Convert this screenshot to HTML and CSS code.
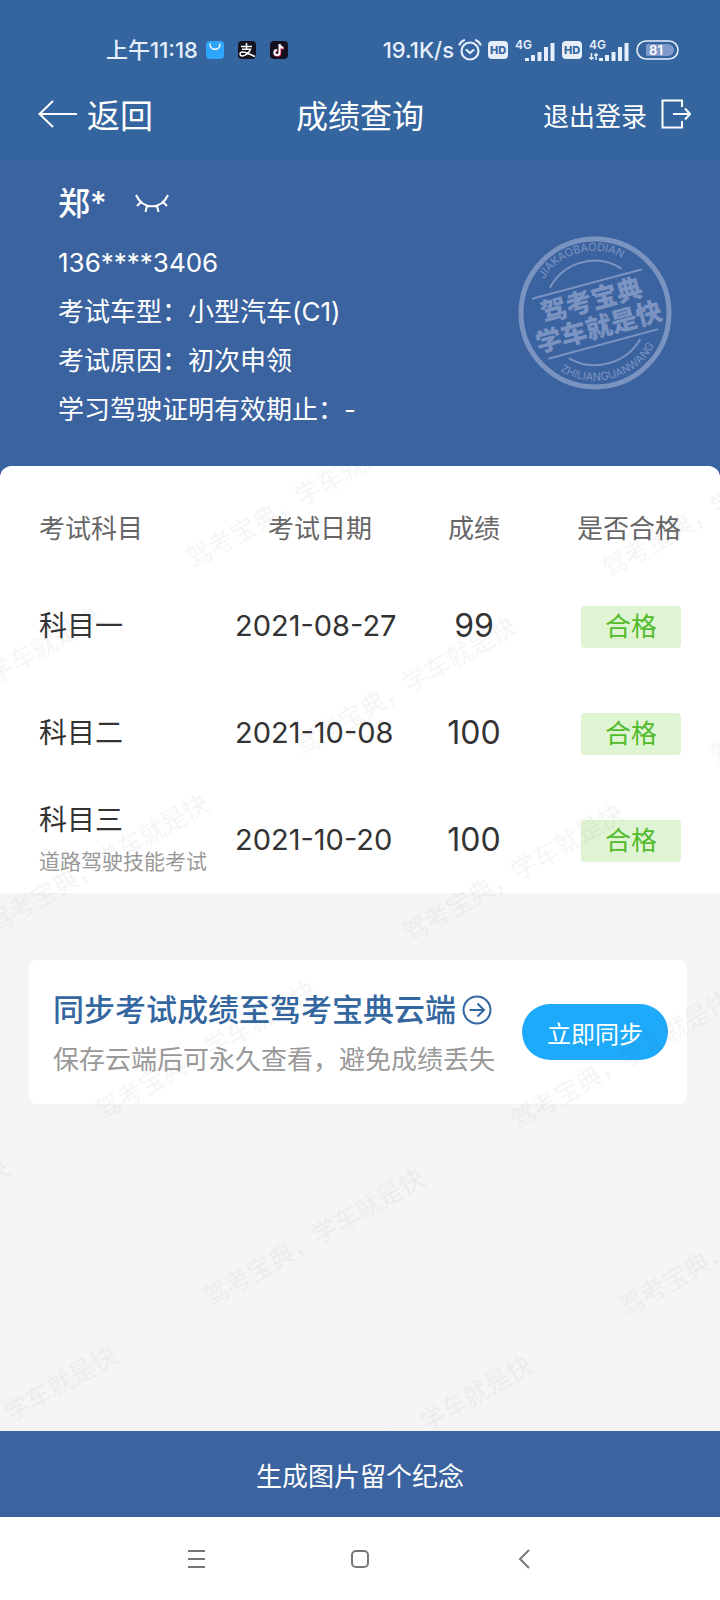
FILE: index.html
```html
<!DOCTYPE html>
<html lang="zh-CN">
<head>
  <meta charset="UTF-8">
  <meta name="viewport" content="width=device-width, initial-scale=1.0">
  <title>成绩查询</title>
  <link rel="stylesheet" href="styles.css">
</head>
<body>
  <!-- 状态栏 -->
  <div class="status">
    <div class="status-left">
      <span>上午11:18</span>
      <svg width="18" height="18" viewBox="0 0 18 18">
        <rect width="18" height="18" rx="4" fill="#2ea6fb"/>
        <path d="M4 3c0 7 10 7 10 0" fill="none" stroke="#fff" stroke-width="1.4" stroke-linecap="round"/>
      </svg>
      <svg width="18" height="18" viewBox="0 0 18 18">
        <rect width="18" height="18" rx="4" fill="#15131f"/>
        <path d="M3 5.500h11M8.500 2v6M4 8.300h8.500C11 12 7.500 15 4.500 15c-3.500 0-3-4 0-4 4 0 7 2.500 12.500 4.500" fill="none" stroke="#fff" stroke-width="1.500"/>
      </svg>
      <svg width="18" height="18" viewBox="0 0 18 18">
        <rect width="18" height="18" rx="4" fill="#15101f"/>
        <path d="M9.500 3v8.500a2.600 2.600 0 1 1-2.600-2.600M9.500 3.500c.4 2 1.800 3.200 3.800 3.300" fill="none" stroke="#e8305f" stroke-width="2" transform="translate(.7 .7)"/>
        <path d="M9.500 3v8.500a2.600 2.600 0 1 1-2.600-2.600M9.500 3.500c.4 2 1.800 3.200 3.800 3.300" fill="none" stroke="#fff" stroke-width="2"/>
      </svg>
    </div>
    <div class="status-right">
      <span>19.1K/s</span>
      <svg width="24" height="24" viewBox="0 0 24 24" fill="none" stroke="#e6eefb" stroke-width="2.200" stroke-linecap="round">
        <circle cx="12" cy="13" r="8.500"/>
        <path d="M8.500 12l3.500 3 3.500-3M1.500 6.500C2.500 4.500 4 3 6 2.200M22.500 6.500c-1-2-2.500-3.500-4.500-4.300"/>
      </svg>
      <svg class="hd" width="20" height="20" viewBox="0 0 20 20">
        <rect y="1" width="20" height="18" rx="4" fill="#e6eefb"/>
        <text x="10" y="14" text-anchor="middle">HD</text>
      </svg>
      <svg class="signal" width="42" height="28" viewBox="0 0 42 28">
        <text x="1" y="13">4G</text>
        <path d="M13 25v-3M19 25v-6M25.500 25v-9M32 25V11M38.500 25V7" stroke="#e6eefb" stroke-width="4"/>
      </svg>
      <svg class="hd" width="20" height="20" viewBox="0 0 20 20">
        <rect y="1" width="20" height="18" rx="4" fill="#e6eefb"/>
        <text x="10" y="14" text-anchor="middle">HD</text>
      </svg>
      <svg class="signal" width="42" height="28" viewBox="0 0 42 28">
        <text x="1" y="13">4G</text>
        <path d="M3.500 17v7M1 22h5M8 17v7M6 19h4" stroke="#e6eefb" stroke-width="1.500"/>
        <path d="M13 25v-3M19 25v-6M25.500 25v-9M32 25V11M38.500 25V7" stroke="#e6eefb" stroke-width="4"/>
      </svg>
      <svg class="battery" width="43" height="20" viewBox="0 0 43 20">
        <rect x="1" y="1" width="41" height="18" rx="9" fill="none" stroke="#e6eefb" stroke-width="1.600"/>
        <path d="M12 4h20a6 6 0 0 1 6 6 6 6 0 0 1-6 6H12a2 2 0 0 1-2-2V6a2 2 0 0 1 2-2z" fill="#7f9aca"/>
        <text x="20" y="15" text-anchor="middle">81</text>
      </svg>
    </div>
  </div>

  <!-- 導航欄 -->
  <header class="navbar">
    <a class="back" href="#">
      <svg width="39" height="28" viewBox="0 0 39 28" fill="none" stroke="#fff" stroke-width="2">
        <path d="M39 14H1.500M15 1L1.500 14 15 27"/>
      </svg>
      返回
    </a>
    <h1>成绩查询</h1>
    <a class="logout" href="#">
      退出登录
      <svg width="30" height="30" viewBox="0 0 30 30" fill="none" stroke="#fff" stroke-width="2">
        <path d="M21 8V1.500H1.500v27H21V22M12 15h17M24 9.500l5 5.500-5 5.500"/>
      </svg>
    </a>
  </header>

  <!-- 考生資訊 -->
  <section class="profile">
    <div class="info">
      <div class="name">
        <h2>郑*</h2>
        <button class="eye" aria-label="显示姓名">
          <svg width="34" height="20" viewBox="0 0 34 20" fill="none" stroke="#fff" stroke-width="2">
            <path d="M1 1c7 15 25 15 32 0M6 8l-4 4M12 12l-1.500 6M22 12l1.500 6M28 8l4 4"/>
          </svg>
        </button>
      </div>
      <p>136****3406</p>
      <p>考试车型：小型汽车(C1)</p>
      <p>考试原因：初次申领</p>
      <p>学习驾驶证明有效期止：-</p>
    </div>
    <svg class="seal" width="154" height="154" viewBox="0 0 154 154">
      <defs>
        <path id="arc-top" d="M20 62A58 58 0 0 1 134 62"/>
        <path id="arc-bottom" d="M12 94A67 67 0 0 0 142 94"/>
      </defs>
      <circle cx="77" cy="77" r="74" fill="none" stroke-width="5"/>
      <g transform="rotate(-15 77 77)">
        <path d="M20 47h114M20 109h114M40 41A50 50 0 0 1 114 41M40 114A53 53 0 0 0 114 114" fill="none" stroke-width="2"/>
        <text class="seal-main" x="77" y="73" text-anchor="middle">驾考宝典</text>
        <text class="seal-main" x="77" y="101" text-anchor="middle">学车就是快</text>
        <text class="seal-sub"><textPath href="#arc-top" startOffset="50%" text-anchor="middle">JIAKAOBAODIAN</textPath></text>
        <text class="seal-sub"><textPath href="#arc-bottom" startOffset="50%" text-anchor="middle">ZHILIANGUANWANG</textPath></text>
      </g>
    </svg>
  </section>

  <main class="content">
    <div class="score">
      <table>
        <thead>
          <tr>
            <th class="subject">考试科目</th>
            <th class="date">考试日期</th>
            <th class="mark">成绩</th>
            <th class="result">是否合格</th>
          </tr>
        </thead>
        <tbody>
          <tr>
            <td class="subject">科目一</td>
            <td class="date">2021-08-27</td>
            <td class="mark">99</td>
            <td class="result"><span class="pass">合格</span></td>
          </tr>
          <tr>
            <td class="subject">科目二</td>
            <td class="date">2021-10-08</td>
            <td class="mark">100</td>
            <td class="result"><span class="pass">合格</span></td>
          </tr>
          <tr>
            <td class="subject">科目三<small>道路驾驶技能考试</small></td>
            <td class="date">2021-10-20</td>
            <td class="mark">100</td>
            <td class="result"><span class="pass">合格</span></td>
          </tr>
        </tbody>
      </table>
    </div>

    <section class="sync">
      <div>
        <h3>
          同步考试成绩至驾考宝典云端
          <svg width="30" height="30" viewBox="0 0 30 30" fill="none" stroke="#3466a0" stroke-width="2">
            <circle cx="15" cy="15" r="13.500"/>
            <path d="M7.500 15h14M15.500 8.500L22 15l-6.500 6.500"/>
          </svg>
        </h3>
        <p>保存云端后可永久查看，避免成绩丢失</p>
      </div>
      <button>立即同步</button>
    </section>

    <!-- 浮水印 -->
    <svg class="watermark" aria-hidden="true">
      <defs>
        <pattern id="mark" x="100" y="0" width="355" height="216" patternUnits="userSpaceOnUse" patternTransform="rotate(-30)">
          <text x="16" y="186">驾考宝典，学车就是快</text>
        </pattern>
      </defs>
      <rect width="100%" height="100%" fill="url(#mark)"/>
    </svg>
  </main>

  <button class="save">生成图片留个纪念</button>

  <!-- 系統按鍵 -->
  <nav class="system">
    <button aria-label="菜单">
      <svg width="20" height="20" viewBox="0 0 20 20" fill="none" stroke="#777" stroke-width="2">
        <path d="M2 2h17M2 10h17M2 18h17"/>
      </svg>
    </button>
    <button aria-label="主页">
      <svg width="20" height="20" viewBox="0 0 20 20" fill="none" stroke="#777" stroke-width="2">
        <rect x="2" y="2" width="16" height="16" rx="4"/>
      </svg>
    </button>
    <button aria-label="返回">
      <svg width="20" height="20" viewBox="0 0 20 20" fill="none" stroke="#777" stroke-width="2">
        <path d="M15 1L6 10l9 9"/>
      </svg>
    </button>
  </nav>
</body>
</html>
```

FILE: styles.css
```css
* {
  box-sizing: border-box;
}

body {
  margin: 0;
  min-height: 100vh;
  display: flex;
  flex-direction: column;
  background: #3b63a0;
  color: #333;
  font-family: Inter, "Noto Sans CJK SC", sans-serif;
  font-size: 26px;
}

h1,
h2,
h3,
p {
  margin: 0;
}

a {
  color: inherit;
  text-decoration: none;
}

button {
  appearance: none;
  border: none;
  padding: 0;
  background: none;
  color: inherit;
  font: inherit;
  cursor: pointer;
}

svg {
  display: block;
  flex-shrink: 0;
}

/* 狀態欄 */
.status {
  display: flex;
  justify-content: space-between;
  padding: 28px 41px 0 106px;
  background: #34659f;
  color: #e6eefb;
  font-size: 22px;
  font-weight: 500;
  line-height: 44px;
}

.status-left,
.status-right {
  display: flex;
  align-items: center;
}

.status-left {
  gap: 14px;
}

.status-left span {
  margin-right: -6px;
}

.status-right {
  gap: 6px;
}

.status-right span {
  margin-right: -2px;
}

.status svg text {
  fill: #e6eefb;
  font-size: 12px;
  font-weight: 600;
}

.status .hd text {
  fill: #34659f;
  font-size: 11px;
  font-weight: 800;
}

.status .battery text {
  fill: #fff;
  font-size: 13px;
}

/* 導航欄 */
.navbar {
  display: grid;
  grid-template-columns: 1fr auto 1fr;
  align-items: center;
  height: 88px;
  padding: 0 29px 4px 29px;
  background: #34659f;
  color: #fff;
}

.navbar h1 {
  font-size: 32px;
  font-weight: 400;
}

.back,
.logout {
  display: flex;
  align-items: center;
}

.back {
  gap: 10px;
  padding-left: 9px;
  font-size: 33px;
}

.logout {
  justify-content: flex-end;
  gap: 14px;
}

/* 考生資訊 */
.profile {
  display: flex;
  justify-content: space-between;
  align-items: center;
  padding: 20px 48px 32px 58px;
  color: #fff;
}

.name {
  display: flex;
  align-items: center;
  gap: 28px;
  margin-bottom: 10px;
}

.name h2 {
  font-size: 32px;
  font-weight: 500;
  line-height: 48px;
}

.info p {
  line-height: 49px;
}

.seal {
  margin-top: 12px;
  stroke: #7b93c1;
}

.seal text {
  fill: #7b93c1;
  stroke: none;
}

.seal .seal-main {
  font-size: 26px;
  font-weight: 900;
}

.seal .seal-sub {
  font-size: 11px;
}

/* 成績 */
.content {
  position: relative;
  flex: 1;
  overflow: hidden;
  border-radius: 12px 12px 0 0;
  background: #f5f5f5;
}

.score {
  padding: 20px 39px 0;
  background: #fff;
}

table {
  width: 100%;
  table-layout: fixed;
  border-collapse: collapse;
}

th,
td {
  padding: 0;
  line-height: 44px;
}

th {
  height: 86px;
  color: #666;
  font-weight: 400;
}

td {
  height: 107px;
  font-size: 28px;
}

.subject {
  width: 196px;
  text-align: left;
}

.subject small {
  display: block;
  color: #999;
  font-size: 21px;
  line-height: 40px;
}

.date {
  width: 170px;
}

td.date {
  font-size: 29px;
}

.mark {
  width: 138px;
  text-align: center;
}

td.mark {
  font-size: 32px;
}

.result {
  text-align: right;
}

.pass {
  display: inline-block;
  width: 100px;
  border-radius: 4px;
  background: #dff4d3;
  color: #52bb2b;
  font-size: 26px;
  line-height: 42px;
  text-align: center;
  vertical-align: middle;
}

/* 同步 */
.sync {
  display: flex;
  justify-content: space-between;
  align-items: center;
  margin: 67px 33px 0 29px;
  padding: 22px 19px 22px 24px;
  border-radius: 8px;
  background: #fff;
}

.sync h3 {
  display: flex;
  align-items: center;
  gap: 6px;
  color: #3466a0;
  font-size: 31px;
  font-weight: 500;
  line-height: 56px;
}

.sync p {
  color: #999;
  line-height: 44px;
}

.sync button {
  width: 146px;
  height: 56px;
  border-radius: 28px;
  background: #1eaafa;
  color: #fff;
  font-size: 24px;
}

.watermark {
  position: absolute;
  top: 0;
  left: 0;
  width: 100%;
  height: 100%;
  pointer-events: none;
}

.watermark text {
  fill: rgba(60, 70, 90, 0.06);
  font-size: 25px;
}

/* 底部 */
.save {
  height: 86px;
  background: #3b63a0;
  color: #fff;
}

.system {
  display: flex;
  justify-content: center;
  gap: 120px;
  padding: 20px 0 19px;
  background: #fff;
}

.system button {
  display: grid;
  place-items: center;
  width: 44px;
  height: 44px;
}
```
